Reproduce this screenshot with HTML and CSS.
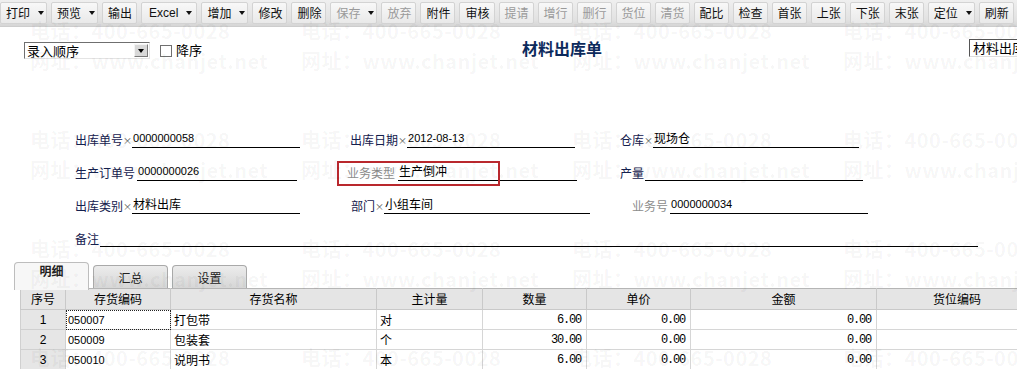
FILE: index.html
```html
<!DOCTYPE html>
<html lang="zh-CN">

<head>
    <meta charset="UTF-8">
    <title>材料出库单</title>
    <link rel="stylesheet" href="styles.css">
</head>

<body>
    <div class="toolbar">
        <span class="tb arr">打印<i></i></span>
        <span class="tb arr">预览<i></i></span>
        <span class="tb">输出</span>
        <span class="tb arr excel">Excel<i></i></span>
        <span class="tb arr">增加<i></i></span>
        <span class="tb">修改</span>
        <span class="tb">删除</span>
        <span class="tb arr off">保存<i></i></span>
        <span class="tb off">放弃</span>
        <span class="tb">附件</span>
        <span class="tb">审核</span>
        <span class="tb off">提请</span>
        <span class="tb off">增行</span>
        <span class="tb off">删行</span>
        <span class="tb off">货位</span>
        <span class="tb off">清货</span>
        <span class="tb">配比</span>
        <span class="tb">检查</span>
        <span class="tb">首张</span>
        <span class="tb">上张</span>
        <span class="tb">下张</span>
        <span class="tb">末张</span>
        <span class="tb arr">定位<i></i></span>
        <span class="tb">刷新</span>
    </div>

    <div class="head">
        <div class="sel">
            <span class="sel-text">录入顺序</span>
            <span class="sel-btn"><i></i></span>
        </div>
        <span class="chk"></span>
        <span class="chk-label">降序</span>
        <h1 class="title">材料出库单</h1>
        <div class="tpl">材料出库单</div>
    </div>

    <div class="form">
        <div class="row">
            <div class="fld">
                <span class="lbl">出库单号</span><span class="req">×</span>
                <span class="val num w168">0000000058</span>
            </div>
            <div class="fld m50">
                <span class="lbl">出库日期</span><span class="req">×</span>
                <span class="val num w168">2012-08-13</span>
            </div>
            <div class="fld m45">
                <span class="lbl">仓库</span><span class="req">×</span>
                <span class="val w206">现场仓</span>
            </div>
        </div>
        <div class="row">
            <div class="fld">
                <span class="lbl sp2">生产订单号</span>
                <span class="val num w160">0000000026</span>
            </div>
            <div class="fld m50">
                <span class="hl"></span>
                <span class="lbl dim sp3">业务类型</span>
                <span class="val w179">生产倒冲</span>
            </div>
            <div class="fld m43">
                <span class="lbl sp1">产量</span>
                <span class="val w218"></span>
            </div>
        </div>
        <div class="row">
            <div class="fld">
                <span class="lbl">出库类别</span><span class="req">×</span>
                <span class="val w168">材料出库</span>
            </div>
            <div class="fld m51">
                <span class="lbl">部门</span><span class="req">×</span>
                <span class="val w206">小组车间</span>
            </div>
            <div class="fld m42">
                <span class="lbl dim sp2">业务号</span>
                <span class="val num w198">0000000034</span>
            </div>
        </div>
        <div class="row">
            <div class="fld">
                <span class="lbl sp1">备注</span>
                <span class="val w878"></span>
            </div>
        </div>
    </div>

    <div class="tabs">
        <span class="tab active">明细</span>
        <span class="tab">汇总</span>
        <span class="tab">设置</span>
    </div>

    <table class="grid">
        <colgroup>
            <col class="c1"><col class="c2"><col class="c3"><col class="c4">
            <col class="c5"><col class="c6"><col class="c7"><col class="c8">
        </colgroup>
        <thead>
            <tr>
                <th>序号</th><th>存货编码</th><th>存货名称</th><th>主计量</th>
                <th>数量</th><th>单价</th><th>金额</th><th>货位编码</th>
            </tr>
        </thead>
        <tbody>
            <tr>
                <td class="no">1</td><td class="code focus">050007</td><td>打包带</td><td>对</td>
                <td class="amt">6.00</td><td class="amt">0.00</td><td class="amt">0.00</td><td></td>
            </tr>
            <tr>
                <td class="no">2</td><td class="code">050009</td><td>包装套</td><td>个</td>
                <td class="amt">30.00</td><td class="amt">0.00</td><td class="amt">0.00</td><td></td>
            </tr>
            <tr>
                <td class="no">3</td><td class="code">050010</td><td>说明书</td><td>本</td>
                <td class="amt">6.00</td><td class="amt">0.00</td><td class="amt">0.00</td><td></td>
            </tr>
        </tbody>
    </table>

    <!-- watermark -->
    <div class="mark">
        <div><p>电话：400-665-0028</p><p>网址：www.chanjet.net</p></div>
        <div><p>电话：400-665-0028</p><p>网址：www.chanjet.net</p></div>
        <div><p>电话：400-665-0028</p><p>网址：www.chanjet.net</p></div>
        <div><p>电话：400-665-0028</p><p>网址：www.chanjet.net</p></div>
        <div><p>电话：400-665-0028</p><p>网址：www.chanjet.net</p></div>
        <div><p>电话：400-665-0028</p><p>网址：www.chanjet.net</p></div>
        <div><p>电话：400-665-0028</p><p>网址：www.chanjet.net</p></div>
        <div><p>电话：400-665-0028</p><p>网址：www.chanjet.net</p></div>
        <div><p>电话：400-665-0028</p><p>网址：www.chanjet.net</p></div>
        <div><p>电话：400-665-0028</p><p>网址：www.chanjet.net</p></div>
        <div><p>电话：400-665-0028</p><p>网址：www.chanjet.net</p></div>
        <div><p>电话：400-665-0028</p><p>网址：www.chanjet.net</p></div>
        <div><p>电话：400-665-0028</p></div>
        <div><p>电话：400-665-0028</p></div>
        <div><p>电话：400-665-0028</p></div>
        <div><p>电话：400-665-0028</p></div>
    </div>
</body>

</html>
```

FILE: styles.css
```css
* {
    box-sizing: border-box;
}

body {
    margin: 0;
    width: 1017px;
    height: 369px;
    overflow: hidden;
    position: relative;
    background: #fff;
    font-family: "Noto Sans CJK SC", sans-serif;
    font-size: 12px;
    color: #000;
}

/* toolbar */
.toolbar {
    display: flex;
    gap: 4px;
    height: 27px;
    align-items: center;
    background: linear-gradient(#efefef, #e2e2e2 75%, #d6d6d6);
    border-bottom: 1px solid #cdcdcd;
}

.tb {
    display: flex;
    align-items: center;
    flex-shrink: 0;
    height: 22px;
    padding: 0 4px 0 5px;
    border: 1px solid #d3d3d3;
    border-radius: 2px;
    background: linear-gradient(#f8f8f8, #e9e9e9);
    font-size: 12px;
    line-height: 12px;
    white-space: nowrap;
    color: #111;
}

.tb.arr {
    padding-right: 2px;
}

.tb i {
    width: 0;
    height: 0;
    margin-left: 8px;
    border-left: 3.5px solid transparent;
    border-right: 3.5px solid transparent;
    border-top: 4px solid #111;
}

.tb.excel {
    font-family: "Liberation Sans", sans-serif;
    padding-left: 7px;
    padding-right: 4px;
}

.tb.off {
    color: #9a9a9a;
}

/* header */
.head {
    display: flex;
    align-items: flex-start;
    height: 40px;
    padding: 14px 0 0 24px;
}

.head > * {
    flex-shrink: 0;
}

.sel {
    display: flex;
    width: 126px;
    height: 17px;
    margin-top: 1px;
    border: 1px solid;
    border-color: #6f6f6f #e4e4e4 #e4e4e4 #6f6f6f;
    background: #fff;
}

.sel-text {
    flex: 1;
    padding-left: 2px;
    font-size: 13px;
    line-height: 15px;
}

.sel-btn {
    display: flex;
    align-items: center;
    justify-content: center;
    width: 14px;
    margin: 1px;
    border: 1px solid;
    border-color: #f4f4f4 #7a7a7a #7a7a7a #f4f4f4;
    background: #d8d8d8;
}

.sel-btn i {
    width: 0;
    height: 0;
    border-left: 3.5px solid transparent;
    border-right: 3.5px solid transparent;
    border-top: 4px solid #000;
}

.chk {
    width: 12px;
    height: 12px;
    margin: 4px 0 0 10px;
    border: 1px solid #6f6f6f;
    background: #fff;
}

.chk-label {
    width: 26px;
    margin-left: 4px;
    font-size: 13px;
    line-height: 18px;
    white-space: nowrap;
}

.title {
    width: 84px;
    margin: -4px 0 0 320px;
    font-size: 16px;
    font-weight: bold;
    line-height: 22px;
    color: #0c2a5c;
    white-space: nowrap;
}

.tpl {
    width: 80px;
    height: 18px;
    margin: -2px 0 0 363px;
    padding-left: 3px;
    border: 1px solid;
    border-color: #555 #ddd #ddd #555;
    font-size: 13px;
    line-height: 16px;
    white-space: nowrap;
    overflow: hidden;
}

/* form */
.form {
    padding-top: 63px;
}

.row {
    display: flex;
    align-items: flex-end;
    height: 18px;
    margin-bottom: 15px;
    padding-left: 75px;
}

.fld {
    display: flex;
    align-items: flex-end;
    position: relative;
    flex-shrink: 0;
}

.lbl {
    font-size: 12px;
    line-height: 17px;
    color: #14204e;
    white-space: nowrap;
}

.lbl.dim {
    color: #8c8c8c;
}

.req {
    width: 9px;
    font-size: 9px;
    line-height: 15px;
    color: #555;
    text-align: center;
}

.sp1 { margin-right: 1px; }
.sp2 { margin-right: 2px; }
.sp3 { margin-right: 3px; }

.val {
    height: 18px;
    padding-left: 1px;
    border-bottom: 1px solid #000;
    font-size: 12px;
    line-height: 16px;
    white-space: nowrap;
}

.val.num {
    font-family: "Liberation Sans", sans-serif;
    font-size: 11px;
}

.w160 { width: 160px; }
.w168 { width: 168px; }
.w179 { width: 179px; }
.w198 { width: 198px; }
.w206 { width: 206px; }
.w218 { width: 218px; }
.w878 { width: 878px; }

.m42 { margin-left: 42px; }
.m43 { margin-left: 43px; }
.m45 { margin-left: 45px; }
.m50 { margin-left: 50px; }
.m51 { margin-left: 51px; }

.hl {
    position: absolute;
    left: -10px;
    top: -2px;
    width: 163px;
    height: 25px;
    border: 2px solid #b9282d;
}

/* tabs */
.tabs {
    display: flex;
    align-items: flex-end;
    gap: 4px;
    height: 26px;
    padding-left: 14px;
    position: relative;
    z-index: 1;
}

.tab {
    width: 75px;
    height: 23px;
    border: 1px solid #a9a9a9;
    border-bottom: 0;
    border-radius: 4px 4px 0 0;
    background: linear-gradient(#ececec, #d6d6d6);
    text-align: center;
    font-size: 12px;
    line-height: 24px;
    color: #222;
}

.tab.active {
    height: 28px;
    margin-bottom: -2px;
    background: #f7f7f7;
    font-weight: bold;
    line-height: 16px;
    border-color: #bdbdbd;
}

/* grid */
.grid {
    margin-left: 20px;
    width: 1017px;
    border-collapse: collapse;
    table-layout: fixed;
    font-size: 12px;
}

.c1 { width: 45px; }
.c2 { width: 105px; }
.c3 { width: 206px; }
.c4 { width: 106px; }
.c5 { width: 104px; }
.c6 { width: 104px; }
.c7 { width: 186px; }
.c8 { width: 161px; }

.grid th {
    height: 21px;
    padding: 0;
    border: 1px solid #c9c9c9;
    border-top-color: #b5b5b5;
    background: #e5e5e5;
    font-weight: normal;
    line-height: 18px;
}

.grid td {
    height: 20px;
    padding: 0 3px;
    border: 1px solid #d6d6d6;
    line-height: 18px;
    white-space: nowrap;
}

.grid td.no {
    background: #e6e6e6;
    text-align: center;
    font-family: "Liberation Sans", sans-serif;
    border-color: #d0d0d0;
}

.grid td.code {
    font-family: "Liberation Sans", sans-serif;
    font-size: 11px;
    padding-left: 2px;
}

.grid td.focus {
    outline: 1px dotted #222;
    outline-offset: -1px;
}

.grid td.amt {
    text-align: right;
    font-family: "Liberation Mono", monospace;
    letter-spacing: -1.2px;
    padding-right: 5px;
}

/* watermark over everything */
.mark {
    position: absolute;
    top: 0;
    left: 0;
    width: 1200px;
    display: grid;
    grid-template-columns: repeat(4, 271px);
    grid-auto-rows: 109px;
    padding: 16px 0 0 30px;
    pointer-events: none;
    z-index: 5;
    color: rgba(0, 0, 0, 0.045);
    font-size: 20px;
    font-weight: bold;
    letter-spacing: 0.5px;
}

.mark p {
    margin: 0;
    line-height: 30px;
    white-space: nowrap;
}
```
